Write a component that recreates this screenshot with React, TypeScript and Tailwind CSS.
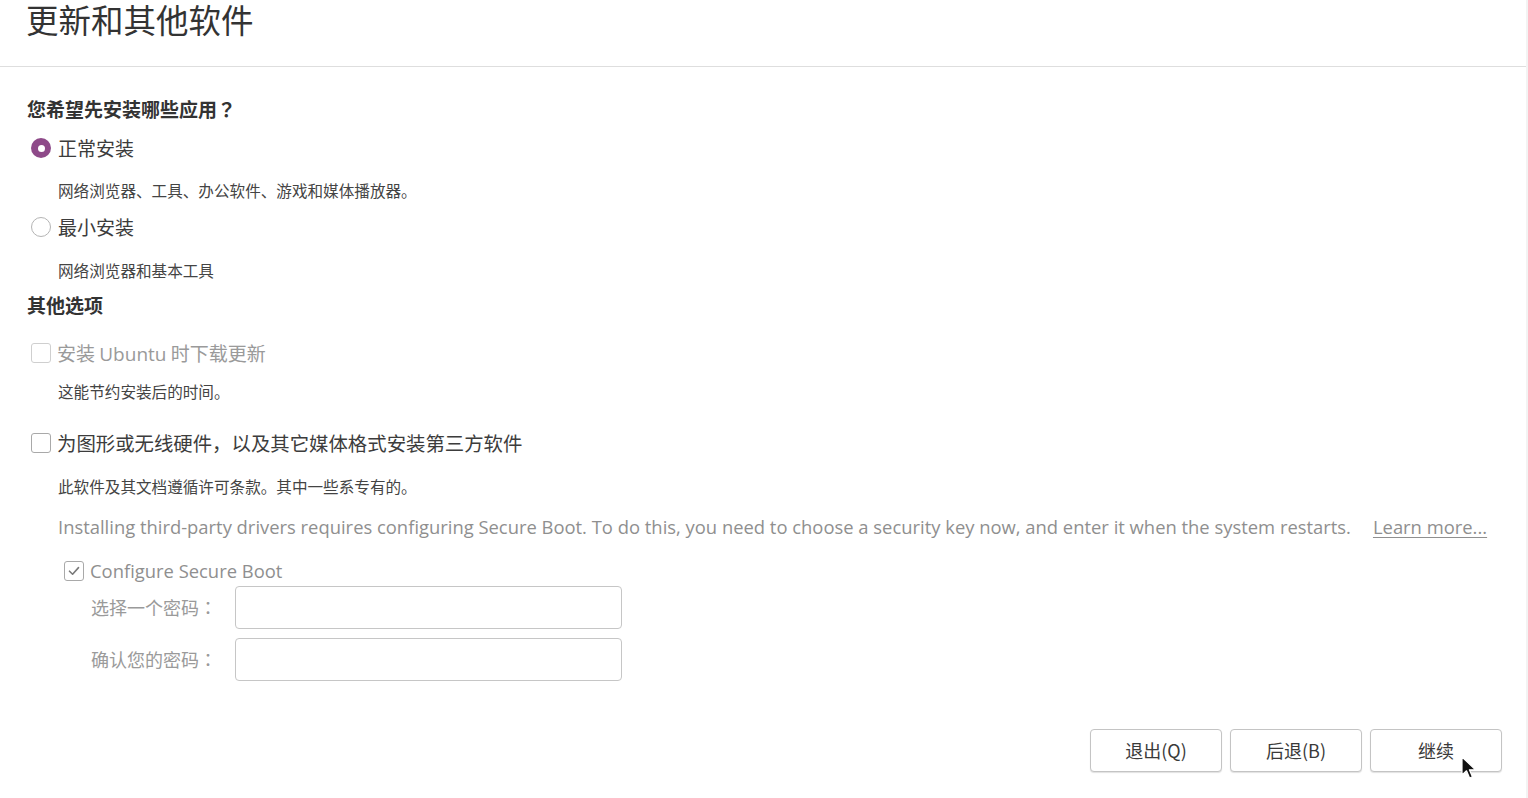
import React from 'react';

const cjk = { fontFamily: '"Noto Sans CJK SC", "Noto Sans", sans-serif' };
const cjkTc = { fontFamily: '"Noto Sans CJK TC", "Noto Sans CJK SC", sans-serif' };
const latin = { fontFamily: '"Open Sans", "Noto Sans CJK SC", sans-serif' };

function Radio({ checked }: { checked?: boolean }) {
  if (checked) {
    return (
      <span className="flex h-[20px] w-[20px] shrink-0 items-center justify-center rounded-full bg-[#8e4a89]">
        <span className="h-[7px] w-[7px] rounded-full bg-white" />
      </span>
    );
  }
  return <span className="h-[20px] w-[20px] shrink-0 rounded-full border border-[#b4b4b4] bg-white" />;
}

function Checkbox({ checked, disabled }: { checked?: boolean; disabled?: boolean }) {
  return (
    <span
      className={
        'flex h-[20px] w-[20px] shrink-0 items-center justify-center rounded-[3px] border bg-white ' +
        (disabled ? 'border-[#cfcfcf]' : 'border-[#a9a9a9]')
      }
    >
      {checked && (
        <svg width="14" height="14" viewBox="0 0 14 14" fill="none">
          <path d="M2.5 7.2 L5.6 10.2 L11.5 3.6" stroke="#7a7a7a" strokeWidth="1.6" strokeLinecap="round" strokeLinejoin="round" />
        </svg>
      )}
    </span>
  );
}

function Button({ label }: { label: string }) {
  return (
    <button
      className="h-[43px] w-[132px] rounded-[4px] border border-[#c4c4c4] bg-white text-[18px] text-[#3a3a3a] shadow-[0_1px_1px_rgba(0,0,0,0.12)]"
      style={cjk}
    >
      {label}
    </button>
  );
}

export default function App() {
  return (
    <div className="relative h-[798px] w-[1528px] overflow-hidden bg-white text-[#3c3c3c]" style={cjk}>
      <div className="h-[67px] w-[1526px] border-b border-[#dedede] pl-[26px]">
        <h1 className="text-[32.5px] font-normal leading-[38px] text-[#333333]">更新和其他软件</h1>
      </div>

      <div className="flex flex-col pl-[27px]">
        <div className="mt-[30px] h-[24px] text-[19px] font-bold leading-[24px] text-[#333333]">
          您希望先安装哪些应用<span style={cjkTc}>？</span>
        </div>

        <div className="mt-[15px] flex h-[24px] items-center gap-[7px] pl-[4px]">
          <Radio checked />
          <span className="text-[19px] leading-[24px]">正常安装</span>
        </div>
        <div className="mt-[19px] h-[22px] pl-[31px] text-[15.6px] leading-[22px] text-[#444444]">
          网络浏览器、工具、办公软件、游戏和媒体播放器。
        </div>

        <div className="mt-[14px] flex h-[24px] items-center gap-[7px] pl-[4px]">
          <Radio />
          <span className="text-[19px] leading-[24px]">最小安装</span>
        </div>
        <div className="mt-[20px] h-[22px] pl-[31px] text-[15.6px] leading-[22px] text-[#444444]">网络浏览器和基本工具</div>

        <div className="mt-[12px] h-[24px] text-[19px] font-bold leading-[24px] text-[#333333]">其他选项</div>

        <div className="mt-[24px] flex h-[24px] items-center gap-[6px] pl-[4px]">
          <Checkbox disabled />
          <span className="text-[19px] leading-[24px] text-[#9a9a9a]">
            安装 <span style={latin}>Ubuntu</span> 时下载更新
          </span>
        </div>
        <div className="mt-[15px] h-[22px] pl-[31px] text-[15.6px] leading-[22px] text-[#444444]">这能节约安装后的时间。</div>

        <div className="mt-[29px] flex h-[24px] items-center gap-[6px] pl-[4px]">
          <Checkbox />
          <span className="text-[19.4px] leading-[24px]">为图形或无线硬件，以及其它媒体格式安装第三方软件</span>
        </div>
        <div className="mt-[20px] h-[22px] pl-[31px] text-[15.6px] leading-[22px] text-[#444444]">
          此软件及其文档遵循许可条款。其中一些系专有的。
        </div>

        <div className="mt-[18px] flex h-[24px] items-center pl-[31px] text-[18.4px] leading-[24px] text-[#8f8f8f]" style={latin}>
          <span>
            Installing third-party drivers requires configuring Secure Boot. To do this, you need to choose a security key now, and enter it when the system restarts.
          </span>
          <span className="ml-[22px] underline underline-offset-[3px]">Learn more...</span>
        </div>

        <div className="mt-[20px] flex h-[24px] items-center gap-[6px] pl-[37px]">
          <Checkbox checked />
          <span className="text-[18.4px] leading-[24px] text-[#8f8f8f]" style={latin}>
            Configure Secure Boot
          </span>
        </div>

        <div className="mt-[3px] flex items-center pl-[64px]">
          <span className="w-[144px] text-[18px] text-[#9a9a9a]">
            选择一个密码<span style={cjkTc}>：</span>
          </span>
          <div className="h-[43px] w-[387px] rounded-[4px] border border-[#c6c6c6] bg-white" />
        </div>
        <div className="mt-[9px] flex items-center pl-[64px]">
          <span className="w-[144px] text-[18px] text-[#9a9a9a]">
            确认您的密码<span style={cjkTc}>：</span>
          </span>
          <div className="h-[43px] w-[387px] rounded-[4px] border border-[#c6c6c6] bg-white" />
        </div>
      </div>

      <div className="mt-[48px] flex justify-end gap-[8px] pr-[26px]">
        <Button label="退出(Q)" />
        <Button label="后退(B)" />
        <Button label="继续" />
      </div>

      <div className="absolute right-0 top-0 h-full w-[2px] bg-[#f3f3f3]" />

      <svg className="absolute left-[1461px] top-[756px]" width="16" height="24" viewBox="0 0 16 24">
        <path d="M1 1 L1 19 L5.5 14.8 L8.6 22 L11.4 20.8 L8.4 13.8 L14.5 13.8 Z" fill="#111111" stroke="#ffffff" strokeWidth="1.2" strokeLinejoin="round" />
      </svg>
    </div>
  );
}
